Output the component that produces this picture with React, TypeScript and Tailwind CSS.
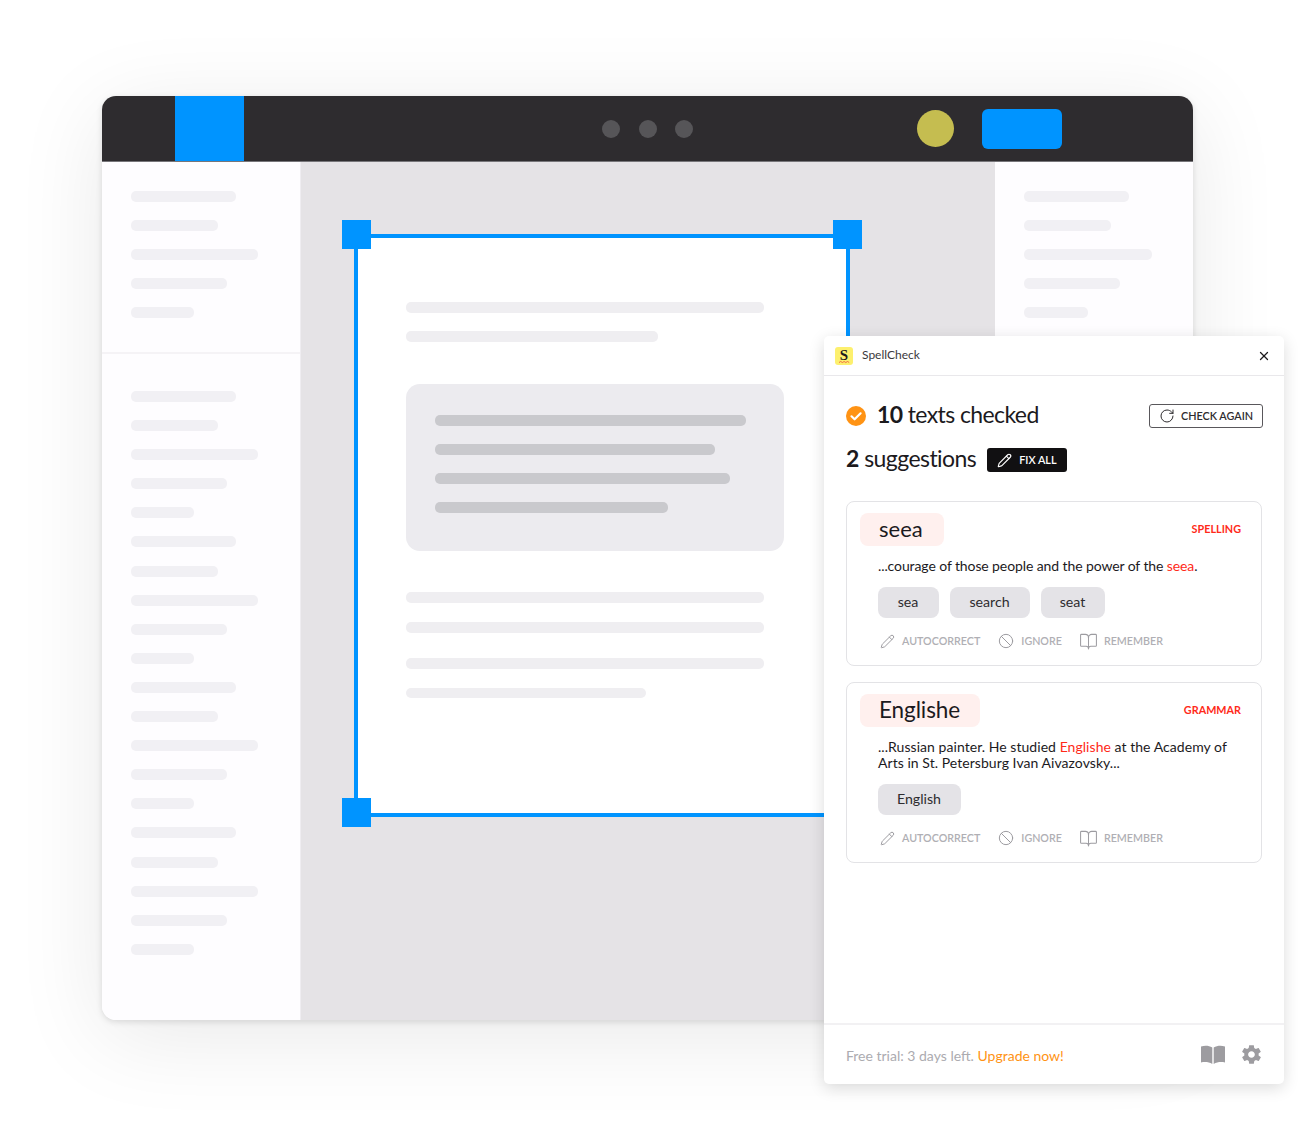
import { Ban, BookOpen, Pencil, RotateCw, X } from "lucide-react";
import { IoMdSettings } from "react-icons/io";

const sideBars = ["w-[105px]", "w-[87px]", "w-[127px]", "w-[96px]", "w-[63px]"];
const rightBars = ["w-[105px]", "w-[87px]", "w-[128px]", "w-[96px]", "w-[64px]"];
const longBars = [...sideBars, ...sideBars, ...sideBars, ...sideBars];

function BarList({ bars }: { bars: string[] }) {
  return (
    <div className="flex flex-col gap-[18.1px]">
      {bars.map((bar, i) => (
        <div key={i} className={`h-[11px] rounded-[5px] bg-[#f1f0f4] blur-[0.5px] ${bar}`} />
      ))}
    </div>
  );
}

function Actions() {
  return (
    <div className="flex items-center h-[16px] text-[10.7px] font-semibold text-[#b0afb4]">
      <Pencil size={15} strokeWidth={1.6} className="ml-[2px] text-[#9d9ca1]" />
      <span className="ml-[7px]">AUTOCORRECT</span>
      <Ban size={16} strokeWidth={1.5} className="ml-[18px] text-[#9d9ca1]" />
      <span className="ml-[7px]">IGNORE</span>
      <BookOpen size={19} strokeWidth={1.3} className="ml-[17px] text-[#9d9ca1]" />
      <span className="ml-[6px]">REMEMBER</span>
    </div>
  );
}

function Fix({ label, className }: { label: string; className: string }) {
  return (
    <button className={`flex h-[31px] items-center justify-center rounded-[8px] bg-[#e4e3e7] pb-[2px] pr-[1px] text-[14.2px] text-[#2e2c2f] ${className}`}>
      {label}
    </button>
  );
}

export default function App() {
  return (
    <div
      className="relative h-[1129px] w-[1299px] overflow-hidden bg-white pl-[102px] pt-[96px]"
      style={{ fontFamily: "Lato, 'Open Sans', sans-serif" }}
    >
      <div className="flex h-[924px] w-[1091px] flex-col overflow-hidden rounded-[14px] bg-white shadow-[0_2px_6px_rgba(0,0,0,0.12),0_16px_90px_rgba(0,0,0,0.09)]">
        <header className="flex h-[66px] shrink-0 items-center border-b border-[#77767a] bg-[#2e2c2f]">
          <div className="ml-[73px] h-full w-[69px] bg-[#0094ff]" />
          <div className="ml-[358px] flex gap-[18.5px]">
            <div className="h-[18px] w-[18px] rounded-full bg-[#565558]" />
            <div className="h-[18px] w-[18px] rounded-full bg-[#565558]" />
            <div className="h-[18px] w-[18px] rounded-full bg-[#565558]" />
          </div>
          <div className="ml-[224px] h-[37px] w-[37px] rounded-full bg-[#c5bd50]" />
          <div className="ml-[28px] h-[40px] w-[80px] rounded-[6px] bg-[#0094ff]" />
        </header>

        <div className="flex min-h-0 flex-1">
          <aside className="flex w-[199px] shrink-0 flex-col border-r border-[#efedf1] bg-[#fefdff]">
            <div className="h-[192px] border-b-2 border-[#f5f3f6] pl-[29px] pt-[29px]">
              <BarList bars={sideBars} />
            </div>
            <div className="pl-[29px] pt-[37px]">
              <BarList bars={longBars} />
            </div>
          </aside>

          <main className="flex-1 bg-[#e5e3e6] pl-[53px] pt-[72px]">
            <div className="relative h-[583px] w-[496px] border-4 border-[#0094ff] bg-white pl-[48px] pt-[64px]">
              <div className="absolute -left-[16px] -top-[18px] h-[29px] w-[29px] bg-[#0094ff]" />
              <div className="absolute -right-[16px] -top-[18px] h-[29px] w-[29px] bg-[#0094ff]" />
              <div className="absolute -bottom-[14px] -left-[16px] h-[29px] w-[29px] bg-[#0094ff]" />
              <div className="h-[11px] w-[358px] rounded-[5px] bg-[#efeef1]" />
              <div className="mt-[18px] h-[11px] w-[252px] rounded-[5px] bg-[#efeef1]" />
              <div className="mt-[42px] flex h-[167px] w-[378px] flex-col gap-[18px] rounded-[14px] bg-[#ecebef] pl-[29px] pt-[31px]">
                <div className="h-[11px] w-[311px] rounded-[5px] bg-[#c9c9cd]" />
                <div className="h-[11px] w-[280px] rounded-[5px] bg-[#c9c9cd]" />
                <div className="h-[11px] w-[295px] rounded-[5px] bg-[#c9c9cd]" />
                <div className="h-[11px] w-[233px] rounded-[5px] bg-[#c9c9cd]" />
              </div>
              <div className="mt-[41px] h-[11px] w-[358px] rounded-[5px] bg-[#efeef1]" />
              <div className="mt-[19px] h-[11px] w-[358px] rounded-[5px] bg-[#efeef1]" />
              <div className="mt-[25px] h-[11px] w-[358px] rounded-[5px] bg-[#efeef1]" />
              <div className="mt-[19px] h-[10px] w-[240px] rounded-[5px] bg-[#efeef1]" />
            </div>
          </main>

          <aside className="w-[198px] shrink-0 bg-[#fefdff] pl-[29px] pt-[29px]">
            <BarList bars={rightBars} />
          </aside>
        </div>
      </div>

      <section className="absolute left-[824px] top-[336px] flex h-[748px] w-[460px] flex-col rounded-[5px] bg-white text-[#1c1a1d] shadow-[0_4px_16px_rgba(0,0,0,0.14)]">
        <div className="flex h-[40px] shrink-0 items-center border-b border-[#e9e8eb] pl-[11px] pr-[13px]">
          <svg width="18" height="18" viewBox="0 0 18 18" className="shrink-0">
            <rect width="18" height="18" rx="3" fill="#fdf06e" />
            <text x="9" y="13" textAnchor="middle" fontSize="15" fontWeight="700" fontFamily="'Liberation Serif', serif" fill="#1c1a1d">S</text>
            <path d="M4 15.5 l1.7 -1 1.7 1 1.7 -1 1.7 1 1.7 -1 1.7 1" fill="none" stroke="#ef4b3a" strokeWidth="0.8" />
          </svg>
          <span className="ml-[9px] pb-[2px] text-[12px] text-[#3a383c]">SpellCheck</span>
          <X size={14} strokeWidth={2.2} className="ml-auto" />
        </div>

        <div className="flex-1 px-[22px] pt-[28px]">
          <div className="flex h-[24px] items-center">
            <svg width="20" height="20" viewBox="0 0 20 20" className="shrink-0">
              <circle cx="10" cy="10" r="10" fill="#ff9314" />
              <path d="M5.5 10.3 l3.1 3 l6 -6" fill="none" stroke="#fff" strokeWidth="2.2" strokeLinecap="round" strokeLinejoin="round" />
            </svg>
            <h2 className="ml-[11px] pb-[3px] text-[23px] leading-none tracking-[-0.6px]">
              <b>10</b> texts checked
            </h2>
            <button className="ml-auto mr-[-1px] flex h-[24px] w-[114px] items-center rounded-[3px] border border-[#59575b] pl-[9px] text-[10.8px] font-semibold text-[#2e2c2f]">
              <RotateCw size={16} strokeWidth={1.5} />
              <span className="ml-[6px]">CHECK AGAIN</span>
            </button>
          </div>
          <div className="mt-[20px] flex h-[24px] items-center">
            <h2 className="pb-[3px] text-[23px] leading-none tracking-[-0.55px]">
              <b>2</b> suggestions
            </h2>
            <button className="ml-[11px] flex h-[24px] w-[80px] items-center rounded-[3px] bg-[#111012] pl-[10px] text-[10.8px] font-semibold text-white">
              <Pencil size={15} strokeWidth={1.8} />
              <span className="ml-[7px]">FIX ALL</span>
            </button>
          </div>

          <article className="mt-[29px] h-[165px] w-[416px] rounded-[8px] border border-[#e3e3e6] pl-[13px] pr-[20px] pt-[11px]">
            <div className="flex items-center justify-between">
              <span className="flex h-[33px] w-[84px] items-center rounded-[8px] bg-[#fff0ee] pb-[2px] pl-[19px] text-[22px]">seea</span>
              <span className="text-[10.8px] font-bold text-[#ff2a1a]">SPELLING</span>
            </div>
            <div className="pl-[18px]">
              <p className="mt-[11px] h-[17px] text-[14px] leading-[17px] tracking-[-0.1px]">
                ...courage of those people and the power of the <span className="text-[#ff2a1a]">seea</span>.
              </p>
              <div className="mt-[13px] flex gap-[11px]">
                <Fix label="sea" className="w-[61px]" />
                <Fix label="search" className="w-[80px]" />
                <Fix label="seat" className="w-[64px]" />
              </div>
              <div className="mt-[15px]">
                <Actions />
              </div>
            </div>
          </article>

          <article className="mt-[16px] h-[181px] w-[416px] rounded-[8px] border border-[#e3e3e6] pl-[13px] pr-[20px] pt-[11px]">
            <div className="flex items-center justify-between">
              <span className="flex h-[33px] w-[120px] items-center rounded-[8px] bg-[#fff0ee] pb-[2px] pl-[19px] text-[22.5px] tracking-[-0.1px]">Englishe</span>
              <span className="text-[10.8px] font-bold text-[#ff2a1a]">GRAMMAR</span>
            </div>
            <div className="pl-[18px]">
              <p className="mt-[12px] text-[14px] leading-[16px] tracking-[0.05px]">
                ...Russian painter. He studied <span className="text-[#ff2a1a]">Englishe</span> at the Academy of
                <br />
                Arts in St. Petersburg Ivan Aivazovsky...
              </p>
              <div className="mt-[13px] flex">
                <Fix label="English" className="w-[83px]" />
              </div>
              <div className="mt-[15px]">
                <Actions />
              </div>
            </div>
          </article>
        </div>

        <footer className="flex h-[61px] shrink-0 items-center border-t-2 border-[#f2f1f3] pl-[22px] pr-[22px] text-[14px] text-[#acabb0]">
          <span className="pt-[1px]">
            Free trial: 3 days left. <span className="text-[#ff9314]">Upgrade now!</span>
          </span>
          <svg width="24" height="19" viewBox="0 0 24 19" className="ml-auto" fill="#9d9ca0">
            <path d="M0 1.5 C4 0 8 0.5 11.3 2.5 V19 C8 17 4 16.5 0 17.5 Z" />
            <path d="M24 1.5 C20 0 16 0.5 12.7 2.5 V19 C16 17 20 16.5 24 17.5 Z" />
          </svg>
          <IoMdSettings size={23} className="ml-[15px] mr-[-1px] text-[#9d9ca0]" />
        </footer>
      </section>
    </div>
  );
}
